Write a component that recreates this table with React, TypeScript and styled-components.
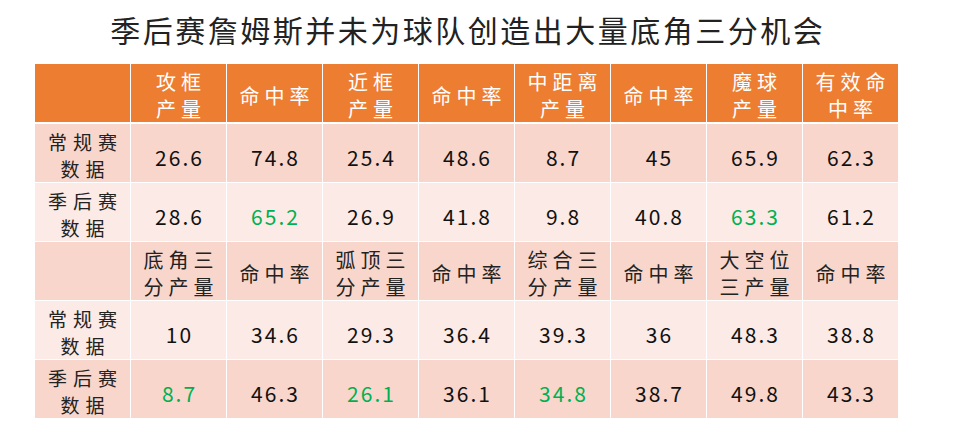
import styled, { createGlobalStyle } from 'styled-components';

type Tone = 'orange' | 'dark' | 'light';

type Row = {
	tone: Tone;
	label?: string[];
	cells: string[];
	green?: number[];
	head?: boolean;
};

const rows: Row[] = [
	{
		tone: 'orange',
		head: true,
		cells: ['攻框\n产量', '命中率', '近框\n产量', '命中率', '中距离\n产量', '命中率', '魔球\n产量', '有效命\n中率'],
	},
	{ tone: 'dark', label: ['常规赛', '数据'], cells: ['26.6', '74.8', '25.4', '48.6', '8.7', '45', '65.9', '62.3'] },
	{ tone: 'light', label: ['季后赛', '数据'], cells: ['28.6', '65.2', '26.9', '41.8', '9.8', '40.8', '63.3', '61.2'], green: [1, 6] },
	{
		tone: 'dark',
		head: true,
		cells: ['底角三\n分产量', '命中率', '弧顶三\n分产量', '命中率', '综合三\n分产量', '命中率', '大空位\n三产量', '命中率'],
	},
	{ tone: 'light', label: ['常规赛', '数据'], cells: ['10', '34.6', '29.3', '36.4', '39.3', '36', '48.3', '38.8'] },
	{ tone: 'dark', label: ['季后赛', '数据'], cells: ['8.7', '46.3', '26.1', '36.1', '34.8', '38.7', '49.8', '43.3'], green: [0, 2, 4] },
];

const bg: Record<Tone, string> = {
	orange: '#ed7d31',
	dark: '#f8d6cc',
	light: '#fbeae6',
};

export default function App() {
	return (
		<>
			<GlobalStyle />
			<Page>
				<Title>季后赛詹姆斯并未为球队创造出大量底角三分机会</Title>
				<Table>
					{rows.map((row, r) => (
						<TableRow key={r} $first={r === 0}>
							<Cell $tone={row.tone} $top>
								{row.label && (
									<Label>
										{row.label.map((line) => (
											<Line key={line}>{line}</Line>
										))}
									</Label>
								)}
							</Cell>
							{row.cells.map((text, c) =>
								row.head ? (
									<Cell key={c} $tone={row.tone} $top={text.includes('\n')}>
										<HeadText $white={row.tone === 'orange'}>
											{text.split('\n').map((line) => (
												<Line key={line}>{line}</Line>
											))}
										</HeadText>
									</Cell>
								) : (
									<Cell key={c} $tone={row.tone}>
										<Num $green={!!row.green?.includes(c)}>{text}</Num>
									</Cell>
								)
							)}
						</TableRow>
					))}
				</Table>
			</Page>
		</>
	);
}

const GlobalStyle = createGlobalStyle`
	body {
		margin: 0;
		background: #ffffff;
		font-family: "Noto Sans CJK SC", "Noto Sans", sans-serif;
	}
`;

const Page = styled.div`
	width: 960px;
	height: 440px;
	padding-left: 35px;
	box-sizing: border-box;
`;

const Title = styled.h1`
	width: 863px;
	margin: 0;
	padding-top: 10px;
	height: 64px;
	box-sizing: border-box;
	text-align: center;
	font-size: 30px;
	line-height: 38px;
	font-weight: 400;
	color: #222222;
	letter-spacing: 2.5px;
	text-indent: 2.5px;
`;

const Table = styled.div`
	width: 863px;
	display: flex;
	flex-direction: column;
	gap: 1px;
	background: #ffffff;
`;

const TableRow = styled.div<{ $first: boolean }>`
	display: grid;
	grid-template-columns: 95px repeat(8, 1fr);
	column-gap: 1px;
	height: ${({ $first }) => ($first ? '57px' : '58px')};
	margin-bottom: ${({ $first }) => ($first ? '2px' : '0')};
`;

const Cell = styled.div<{ $tone: Tone; $top?: boolean }>`
	background: ${({ $tone }) => bg[$tone]};
	display: flex;
	align-items: ${({ $top }) => ($top ? 'flex-start' : 'center')};
	justify-content: center;
`;

const Line = styled.span`
	display: block;
`;

const Label = styled.div`
	display: flex;
	flex-direction: column;
	align-items: center;
	padding-top: 4px;
	font-size: 19px;
	line-height: 27px;
	letter-spacing: 6px;
	padding-left: 6px;
	color: #222222;
`;

const HeadText = styled.div<{ $white: boolean }>`
	display: flex;
	flex-direction: column;
	align-items: center;
	padding-top: 4px;
	font-size: 20px;
	line-height: 27px;
	letter-spacing: 5px;
	padding-left: 5px;
	color: ${({ $white }) => ($white ? '#ffffff' : '#222222')};
`;

const Num = styled.span<{ $green: boolean }>`
	font-size: 21px;
	letter-spacing: 2px;
	padding-left: 2px;
	padding-top: 7px;
	color: ${({ $green }) => ($green ? '#00b050' : '#111111')};
`;
